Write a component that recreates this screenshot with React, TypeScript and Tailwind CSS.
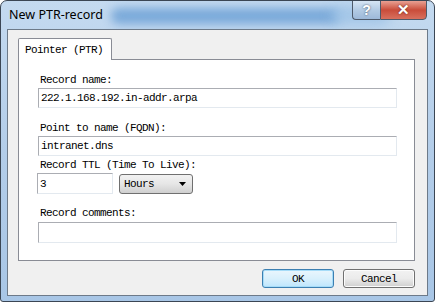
import { useState } from "react";

const mono = "font-['Liberation_Mono','DejaVu_Sans_Mono',monospace] text-[11px] tracking-[-0.6px] leading-[12px] text-black";

const Field = ({ value, onChange, className }: { value: string; onChange: (v: string) => void; className?: string }) => (
  <input
    value={value}
    onChange={(e) => onChange(e.target.value)}
    className={`${mono} block h-[20px] border border-[#abadb3] border-r-[#e3e9ef] border-b-[#e3e9ef] bg-white px-[2px] outline-none ${className ?? ""}`}
  />
);

const App = () => {
  const [recordName, setRecordName] = useState("222.1.168.192.in-addr.arpa");
  const [target, setTarget] = useState("intranet.dns");
  const [ttl, setTtl] = useState("3");
  const [comments, setComments] = useState("");

  return (
    <div className="w-[435px] h-[303px] bg-white">
      <div className="relative w-[435px] h-[302px] overflow-hidden rounded-t-[7px] rounded-b-[3px] border border-[#3b4654] bg-gradient-to-b from-[#c4daf0] via-[#b3cde9] to-[#a8c6e6]">
        {/* glass blur behind title */}
        <div className="absolute left-[110px] top-[7px] w-[230px] h-[16px] rounded-full bg-[#4a8acb] opacity-60 blur-[5px]" />
        <div className="absolute left-[330px] top-[4px] w-[60px] h-[20px] rounded-full bg-[#9cc2e6] opacity-80 blur-[6px]" />

        {/* title bar */}
        <div className="relative flex h-[28px] items-start">
          <span className="ml-[8px] mt-[6px] font-['Noto_Sans',sans-serif] text-[12.5px] leading-[16px] text-black">
            New PTR-record
          </span>
          <div className="ml-auto mr-[7px] flex h-[20px] -mt-px">
            <div className="flex w-[28px] items-center justify-center rounded-bl-[4px] border border-r-0 border-[#4e5a6a] bg-gradient-to-b from-[#d6e5f4] via-[#b3cbe4] to-[#9db9d9] font-['Liberation_Sans',sans-serif] text-[14px] font-bold text-white [text-shadow:0_0_2px_#3a4a5e]">
              ?
            </div>
            <div className="flex w-[47px] items-center justify-center rounded-br-[4px] border border-[#4e5a6a] bg-gradient-to-b from-[#e8a093] via-[#c94c3a] to-[#d8705e] font-['Liberation_Sans',sans-serif] text-[15px] font-bold text-white [text-shadow:0_0_2px_#5a1a10]">
              ✕
            </div>
          </div>
        </div>

        {/* client area */}
        <div className="relative mx-[6px] h-[267px] border border-[#6d7a89] bg-[#f0f0f0]">
          <div className="pl-[10px] pt-[8px]">
            {/* tab */}
            <div className="flex">
              <div className={`${mono} relative z-10 -mb-px flex h-[22px] w-[94px] items-center rounded-t-[2px] border border-b-0 border-[#898c95] bg-white pl-[6px]`}>
                Pointer (PTR)
              </div>
            </div>
            <div className="h-[202px] w-[397px] border border-[#898c95] bg-white pl-[19px] pt-[14px]">
              <div className={`${mono} ml-[2px]`}>Record name:</div>
              <Field value={recordName} onChange={setRecordName} className="mt-[2px] w-[359px]" />
              <div className={`${mono} ml-[2px] mt-[14px]`}>Point to name (FQDN):</div>
              <Field value={target} onChange={setTarget} className="mt-[2px] w-[359px]" />
              <div className={`${mono} ml-[2px] mt-[3px]`}>Record TTL (Time To Live):</div>
              <div className="mt-[2px] flex items-start">
                <Field value={ttl} onChange={setTtl} className="-ml-px h-[21px] w-[76px]" />
                <div className={`${mono} ml-[6px] mt-px flex h-[20px] w-[74px] items-center justify-between rounded-[3px] border border-[#707070] bg-gradient-to-b from-[#f2f2f2] via-[#e6e6e6] to-[#cfcfcf] pl-[4px] pr-[6px]`}>
                  Hours
                  <svg width="7" height="4" viewBox="0 0 7 4">
                    <path d="M0 0h7L3.5 4z" fill="#000" />
                  </svg>
                </div>
              </div>
              <div className={`${mono} ml-[2px] mt-[13px]`}>Record comments:</div>
              <Field value={comments} onChange={setComments} className="mt-[3px] h-[21px] w-[359px]" />
            </div>
          </div>

          {/* buttons */}
          <div className="mt-[8px] flex justify-end gap-[9px] pr-[12px]">
            <button className={`${mono} h-[19px] w-[72px] rounded-[3px] border border-[#3c7fb1] bg-gradient-to-b from-[#eaf6fd] via-[#d9f0fc] to-[#bee6fd] shadow-[inset_0_0_0_1px_#a6dcf8]`}>
              OK
            </button>
            <button className={`${mono} h-[19px] w-[72px] rounded-[3px] border border-[#707070] bg-gradient-to-b from-[#f2f2f2] via-[#ebebeb] to-[#cfcfcf] shadow-[inset_0_0_0_1px_#fcfcfc]`}>
              Cancel
            </button>
          </div>
        </div>
      </div>
    </div>
  );
};

export default App;
